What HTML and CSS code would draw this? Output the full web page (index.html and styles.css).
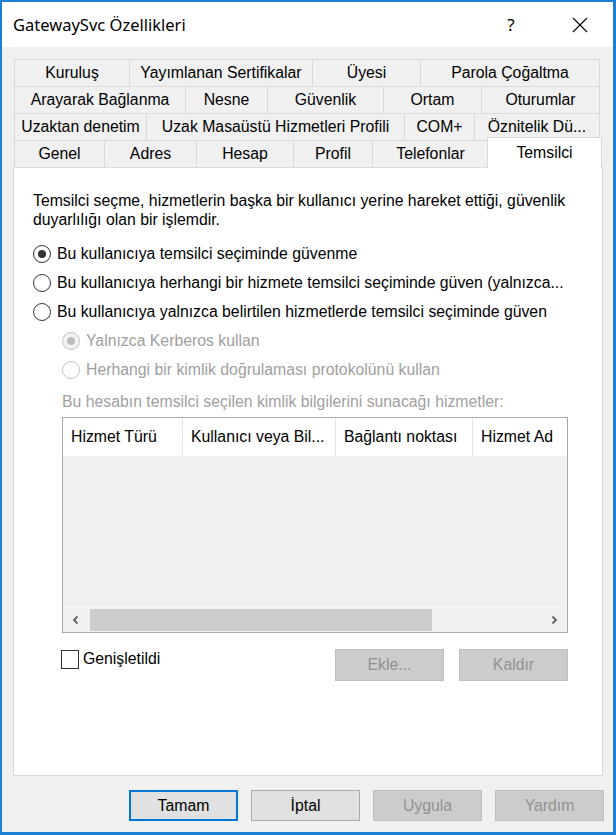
FILE: index.html
```html
<!DOCTYPE html>
<html lang="tr">
<head>
<meta charset="utf-8">
<title>GatewaySvc Özellikleri</title>
<link rel="stylesheet" href="styles.css">
</head>
<body>
<div class="window">
  <div class="titlebar">
    <span class="title">GatewaySvc Özellikleri</span>
    <span class="help">?</span>
    <span class="close">
      <svg width="16" height="16" viewBox="0 0 16 16"><path d="M1 1 L15 15 M15 1 L1 15" stroke="#000" stroke-width="1.1" fill="none"/></svg>
    </span>
  </div>
  <div class="content">
    <div class="tabs">
      <div class="tabrow r1">
        <div class="tab">Kuruluş</div>
        <div class="tab">Yayımlanan Sertifikalar</div>
        <div class="tab">Üyesi</div>
        <div class="tab">Parola Çoğaltma</div>
      </div>
      <div class="tabrow r2">
        <div class="tab">Arayarak Bağlanma</div>
        <div class="tab">Nesne</div>
        <div class="tab">Güvenlik</div>
        <div class="tab">Ortam</div>
        <div class="tab">Oturumlar</div>
      </div>
      <div class="tabrow r3">
        <div class="tab">Uzaktan denetim</div>
        <div class="tab">Uzak Masaüstü Hizmetleri Profili</div>
        <div class="tab">COM+</div>
        <div class="tab">Öznitelik Dü...</div>
      </div>
      <div class="tabrow r4">
        <div class="tab">Genel</div>
        <div class="tab">Adres</div>
        <div class="tab">Hesap</div>
        <div class="tab">Profil</div>
        <div class="tab">Telefonlar</div>
        <div class="tab sel">Temsilci</div>
      </div>
    </div>
    <div class="panel">
      <p class="desc">Temsilci seçme, hizmetlerin başka bir kullanıcı yerine hareket ettiği, güvenlik<br>duyarlılığı olan bir işlemdir.</p>
      <div class="options">
        <div class="radio-row"><span class="radio on"></span><span>Bu kullanıcıya temsilci seçiminde güvenme</span></div>
        <div class="radio-row"><span class="radio"></span><span>Bu kullanıcıya herhangi bir hizmete temsilci seçiminde güven (yalnızca...</span></div>
        <div class="radio-row"><span class="radio"></span><span>Bu kullanıcıya yalnızca belirtilen hizmetlerde temsilci seçiminde güven</span></div>
        <div class="radio-row sub"><span class="radio on"></span><span>Yalnızca Kerberos kullan</span></div>
        <div class="radio-row sub"><span class="radio"></span><span>Herhangi bir kimlik doğrulaması protokolünü kullan</span></div>
      </div>
      <p class="hint">Bu hesabın temsilci seçilen kimlik bilgilerini sunacağı hizmetler:</p>
      <div class="list">
        <div class="list-head">
          <div class="col">Hizmet Türü</div>
          <div class="col">Kullanıcı veya Bil...</div>
          <div class="col">Bağlantı noktası</div>
          <div class="col">Hizmet Ad</div>
        </div>
        <div class="list-body"></div>
        <div class="hscroll">
          <span class="arrow">
            <svg width="10" height="10" viewBox="0 0 10 10"><path d="M6.5 1.5 L3 5 L6.5 8.5" stroke="#606060" stroke-width="1.8" fill="none"/></svg>
          </span>
          <span class="thumb"></span>
          <span class="track"></span>
          <span class="arrow">
            <svg width="10" height="10" viewBox="0 0 10 10"><path d="M3.5 1.5 L7 5 L3.5 8.5" stroke="#606060" stroke-width="1.8" fill="none"/></svg>
          </span>
        </div>
      </div>
      <div class="bottom-row">
        <label class="checkrow"><span class="check"></span><span>Genişletildi</span></label>
        <div class="side-buttons">
          <span class="btn dis">Ekle...</span>
          <span class="btn dis">Kaldır</span>
        </div>
      </div>
    </div>
    <div class="footer">
      <span class="btn default">Tamam</span>
      <span class="btn">İptal</span>
      <span class="btn dis">Uygula</span>
      <span class="btn dis">Yardım</span>
    </div>
  </div>
</div>
</body>
</html>
```
FILE: styles.css
```css
* { box-sizing: border-box; }

body {
  margin: 0;
  font-family: "Liberation Sans", Arial, sans-serif;
  font-size: 15.8px;
  color: #000;
  background: #fff;
}

.window {
  width: 616px;
  height: 835px;
  border-style: solid;
  border-color: #1c7fd6;
  border-width: 2px 3px 3px 2px;
  background: #f0f0f0;
  display: flex;
  flex-direction: column;
}

.titlebar {
  height: 45px;
  background: #fff;
  display: flex;
  align-items: center;
  padding-left: 11px;
  padding-right: 10px;
  flex: none;
}

.title {
  flex: 1;
  font-family: "Noto Sans", "Open Sans", sans-serif;
  font-size: 16.5px;
  color: #000;
}

.help {
  width: 46px;
  text-align: center;
  font-family: "Noto Sans", sans-serif;
  font-size: 17px;
  margin-right: 23px;
}

.close {
  width: 46px;
  display: flex;
  justify-content: center;
  align-items: center;
}

.content {
  padding-top: 12px;
  flex: 1;
  display: flex;
  flex-direction: column;
}

.tabs {
  width: 586px;
  margin-left: 12px;
}

.tabrow {
  display: grid;
  height: 27px;
  border-left: 1px solid #d9d9d9;
}

.r1 { grid-template-columns: 115px 183px 108px 1fr; }
.r2 { grid-template-columns: 171px 82px 116px 98px 1fr; }
.r3 { grid-template-columns: 132px 258px 70px 1fr; }
.r4 { grid-template-columns: 90px 92px 97px 79px 116px 1fr; }

.tab {
  border-top: 1px solid #d9d9d9;
  border-right: 1px solid #d9d9d9;
  text-align: center;
  line-height: 26px;
  white-space: nowrap;
  overflow: hidden;
}

.tab.sel {
  background: #fff;
  margin: -3px -2px -1px -2px;
  border-left: 1px solid #d9d9d9;
  line-height: 29px;
  position: relative;
  z-index: 1;
}

.panel {
  margin-left: 11px;
  width: 590px;
  height: 609px;
  background: #fff;
  border: 1px solid #d9d9d9;
  padding: 23px 19px 0 19px;
  flex: none;
}

.desc {
  margin: 0;
  line-height: 19px;
  white-space: nowrap;
}

.options {
  margin-top: 10px;
}

.radio-row {
  height: 29px;
  display: flex;
  align-items: center;
  gap: 6px;
  white-space: nowrap;
}

.radio {
  width: 18px;
  height: 18px;
  border-radius: 50%;
  border: 1px solid #333;
  background: #fff;
  display: flex;
  align-items: center;
  justify-content: center;
  flex: none;
}

.radio.on::after {
  content: "";
  width: 8px;
  height: 8px;
  border-radius: 50%;
  background: #333;
}

.sub {
  padding-left: 29px;
  color: #a0a0a0;
}

.sub .radio {
  border-color: #c4c4c4;
}

.sub .radio.on {
  background: #f2f2f2;
}

.sub .radio.on::after {
  background: #bdbdbd;
}

.hint {
  margin: 8px 0 6px 29px;
  line-height: 19px;
  color: #a0a0a0;
  white-space: nowrap;
}

.list {
  margin-left: 29px;
  width: 506px;
  height: 216px;
  border: 1px solid #a8a8a8;
  background: #f0f0f0;
  display: flex;
  flex-direction: column;
}

.list-head {
  height: 38px;
  background: #fff;
  display: grid;
  grid-template-columns: 120px 153px 137px 1fr;
  flex: none;
}

.col {
  border-right: 1px solid #e5e5e5;
  padding-left: 8px;
  line-height: 38px;
  white-space: nowrap;
  overflow: hidden;
}

.col:last-child {
  border-right: none;
}

.list-body {
  flex: 1;
}

.hscroll {
  height: 25px;
  display: flex;
  align-items: center;
  border-top: 1px solid #f7f7f7;
  flex: none;
}

.arrow {
  width: 26px;
  height: 24px;
  display: flex;
  align-items: center;
  justify-content: center;
  flex: none;
}

.thumb {
  width: 342px;
  height: 22px;
  margin-left: 1px;
  background: #cdcdcd;
  flex: none;
}

.track {
  flex: 1;
}

.bottom-row {
  display: flex;
  justify-content: space-between;
  align-items: flex-start;
  margin: 16px 0 0 28px;
  width: 507px;
}

.checkrow {
  display: flex;
  align-items: center;
  gap: 4px;
  height: 20px;
}

.check {
  width: 18px;
  height: 19px;
  border: 1px solid #333;
  background: #fff;
}

.side-buttons {
  display: flex;
  gap: 15px;
}

.btn {
  display: block;
  width: 109px;
  height: 32px;
  border: 1px solid #adadad;
  background: #e1e1e1;
  text-align: center;
  line-height: 30px;
}

.btn.dis {
  background: #cccccc;
  border-color: #bfbfbf;
  color: #939393;
}

.footer {
  display: flex;
  justify-content: flex-end;
  gap: 13px;
  margin-top: 14px;
  padding-right: 9px;
}

.footer .btn {
  height: 31px;
  line-height: 29px;
}

.footer .btn.default {
  border: 2px solid #0078d7;
  line-height: 27px;
}
```
